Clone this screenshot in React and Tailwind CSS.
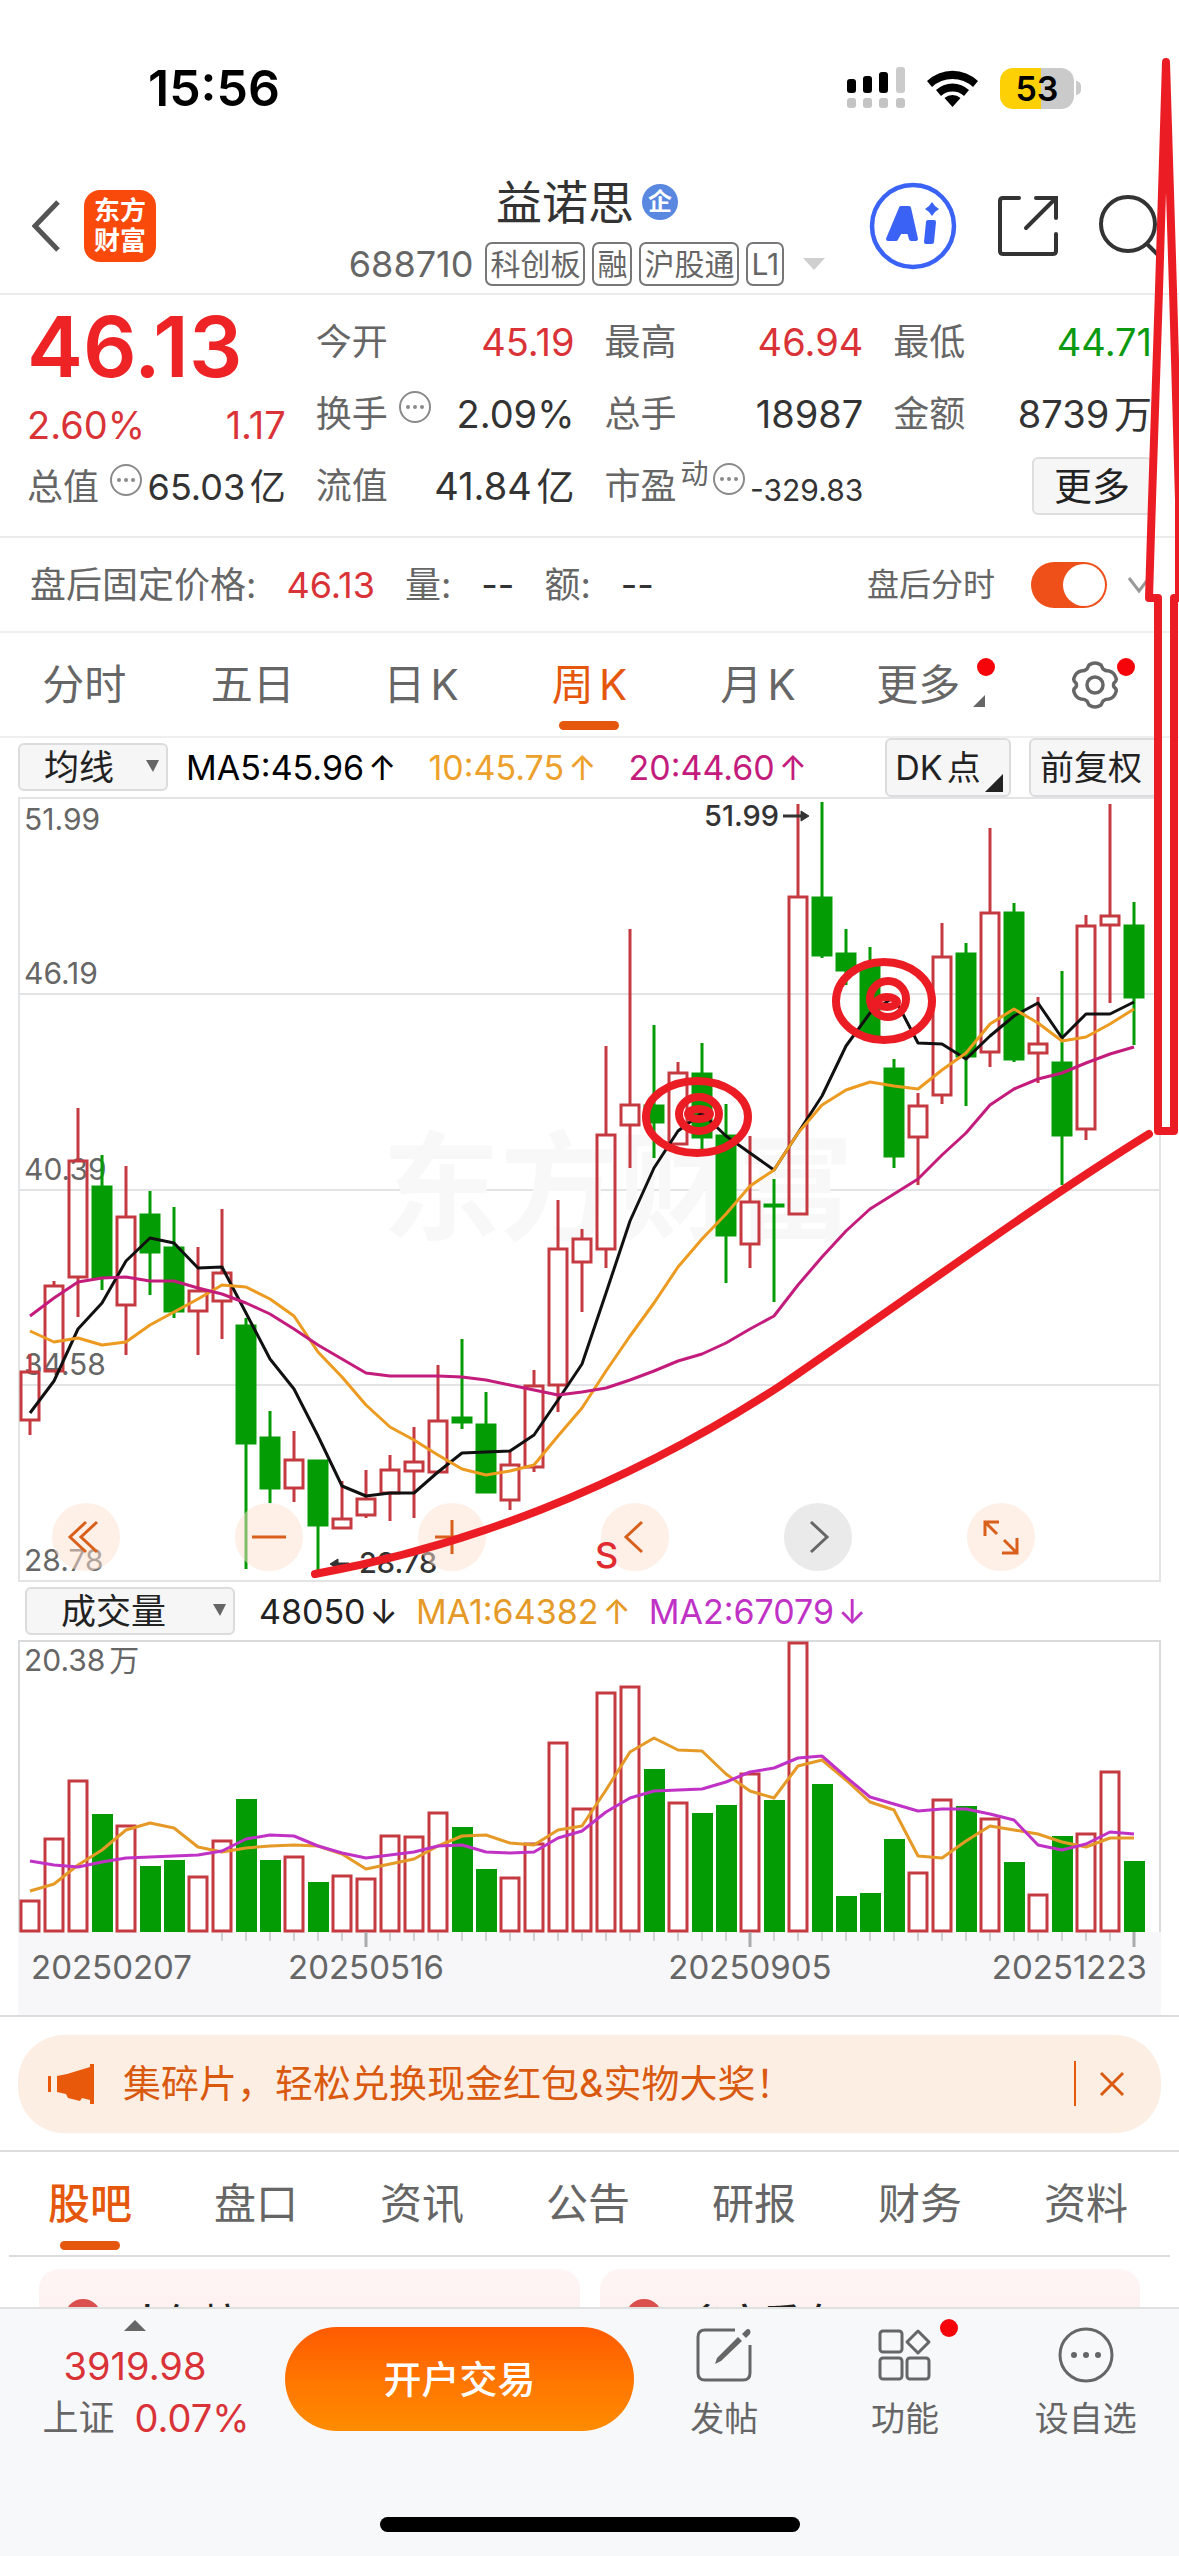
import { useState } from 'react'

// [rising, high, body top, body bottom, low, volume height]
const CANDLES = [
  [1, 557, 574, 624, 638, 33], [1, 484, 488, 575, 575, 95], [1, 311, 363, 481, 520, 153],
  [0, 358, 389, 481, 493, 118], [1, 369, 419, 509, 558, 108], [0, 394, 417, 456, 498, 66],
  [0, 410, 450, 515, 521, 72], [1, 450, 493, 515, 558, 57], [1, 412, 475, 505, 542, 93],
  [0, 521, 528, 647, 772, 133], [0, 614, 640, 692, 706, 72], [1, 634, 662, 692, 705, 77],
  [0, 663, 663, 729, 773, 50], [1, 684, 721, 732, 732, 58], [1, 673, 701, 719, 721, 55],
  [1, 658, 672, 697, 724, 98], [1, 630, 664, 675, 721, 97], [1, 568, 623, 676, 676, 121],
  [0, 542, 620, 626, 632, 105], [0, 595, 627, 696, 696, 63], [1, 655, 667, 704, 713, 56],
  [1, 573, 588, 671, 675, 90], [1, 403, 451, 589, 615, 191], [1, 432, 441, 466, 515, 125],
  [1, 249, 337, 453, 471, 241], [1, 132, 307, 329, 371, 247], [0, 228, 308, 326, 361, 163],
  [1, 265, 275, 348, 348, 131], [0, 246, 276, 341, 352, 119], [0, 307, 338, 439, 486, 127],
  [1, 339, 404, 448, 471, 160], [0, 382, 407, 409, 505, 132], [1, 7, 99, 418, 418, 291],
  [0, 5, 100, 159, 161, 148], [0, 132, 156, 174, 188, 36], [0, 150, 169, 240, 240, 39],
  [0, 262, 271, 360, 371, 93], [1, 296, 308, 341, 388, 61], [1, 126, 159, 299, 307, 134],
  [0, 146, 156, 260, 309, 126], [1, 31, 115, 256, 270, 115], [0, 106, 115, 263, 265, 70],
  [1, 200, 246, 257, 286, 39], [0, 174, 265, 339, 388, 96], [1, 118, 128, 333, 343, 100],
  [1, 7, 118, 129, 206, 162], [0, 105, 128, 201, 248, 71],
]

const MA5 = [616, 584, 532, 506, 464, 441, 446, 471, 470, 516, 562, 592, 639, 689, 699, 696, 696, 675, 656, 655, 654, 638, 603, 567, 496, 424, 371, 334, 316, 339, 356, 373, 336, 299, 249, 216, 200, 246, 247, 262, 239, 219, 206, 241, 217, 217, 205]
const MA10 = [534, 545, 541, 548, 545, 528, 515, 502, 488, 490, 502, 519, 555, 580, 608, 630, 643, 658, 672, 678, 674, 668, 639, 611, 574, 539, 506, 470, 442, 417, 389, 373, 336, 308, 293, 285, 289, 292, 273, 256, 227, 212, 226, 244, 240, 227, 212]
const MA20 = [519, 501, 485, 481, 480, 484, 484, 491, 497, 506, 517, 532, 548, 562, 576, 579, 579, 579, 580, 583, 588, 593, 598, 595, 591, 583, 574, 564, 557, 546, 532, 519, 488, 460, 434, 412, 397, 382, 358, 336, 308, 292, 282, 276, 266, 257, 250]
const VOL_MA1 = [251, 244, 225, 210, 190, 183, 188, 207, 212, 208, 206, 205, 206, 214, 229, 224, 219, 206, 196, 195, 203, 205, 190, 186, 150, 112, 98, 110, 111, 134, 151, 158, 126, 120, 140, 162, 170, 216, 218, 201, 186, 190, 194, 202, 207, 198, 198]
const VOL_MA2 = [221, 225, 227, 222, 218, 217, 216, 215, 211, 199, 195, 196, 206, 213, 218, 215, 212, 206, 205, 212, 213, 212, 198, 191, 172, 158, 151, 150, 149, 142, 132, 128, 118, 116, 137, 157, 164, 171, 169, 169, 174, 180, 205, 210, 204, 192, 194]

const RED = '#c53a40'
const GREEN = '#049c04'

const cx = (i) => 12 + i * 24
const toPoints = (values) => values.map((y, i) => `${cx(i)},${y}`).join(' ')

const PERIODS = ['分时', '五日', '日K', '周K', '月K', '更多']
const SECTIONS = ['股吧', '盘口', '资讯', '公告', '研报', '财务', '资料']

function StatusBar() {
  return (
    <div className="h-[130px] pt-[46px] pl-[148px] pr-[98px] flex items-center justify-between text-black">
      <span className="text-[50px] font-semibold">15:56</span>
      <div className="flex items-center gap-[22px]">
        <svg className="w-[58px] h-[42px]" viewBox="0 0 58 42">
          <rect x="0" y="12" width="9" height="14" rx="3" />
          <rect x="16" y="9" width="9" height="17" rx="3" />
          <rect x="32" y="5" width="9" height="21" rx="3" />
          <rect x="49" y="0" width="9" height="26" rx="3" fill="#cbcbcb" />
          {[0, 16, 32, 49].map((x) => (
            <rect key={x} x={x} y="31" width="9" height="10" rx="3" fill="#c4c4c4" />
          ))}
        </svg>
        <svg className="w-[51px] h-[38px]" viewBox="0 0 51 38">
          <path d="M0 12 A37 37 0 0 1 51 12 L46 18 A30 30 0 0 0 5 18 Z" />
          <path d="M9 21 A24 24 0 0 1 42 21 L37 27 A17 17 0 0 0 14 27 Z" />
          <path d="M17.500 29 A12 12 0 0 1 33.500 29 L25.500 38 Z" />
        </svg>
        <div className="flex items-center gap-[2px]">
          <div className="w-[74px] h-[41px] rounded-[13px] bg-linear-to-r from-[#fdd006] from-55% to-[#cacaca] to-55% flex items-center justify-center text-[34px] font-semibold">
            53
          </div>
          <div className="w-[5px] h-[14px] rounded-r-full bg-[#cacaca]" />
        </div>
      </div>
    </div>
  )
}

function Tag({ children }) {
  return (
    <span className="h-[44px] px-[3px] flex items-center border-2 border-[#777] rounded-[7px] text-[30px] text-[#666]">
      {children}
    </span>
  )
}

function Header() {
  return (
    <header className="h-[165px] pt-[29px] border-b-2 border-[#ebebeb] grid grid-cols-[1fr_auto_1fr] items-center">
      <div className="pl-[32px] flex items-center gap-[24px]">
        <button type="button" aria-label="返回">
          <svg className="w-[28px] h-[52px]" viewBox="0 0 28 52" fill="none" stroke="#555" strokeWidth="5">
            <path d="M26 2 L3 26 L26 50" />
          </svg>
        </button>
        <div className="w-[72px] h-[72px] rounded-[16px] bg-[#fa4a0b] text-white text-[26px] leading-[30px] font-bold flex flex-col items-center justify-center">
          <span>东方</span>
          <span>财富</span>
        </div>
      </div>
      <div className="pt-[8px] pr-[5px] flex flex-col items-center gap-[12px]">
        <h1 className="h-14 flex items-center gap-[8px] text-[46px] text-[#333]">
          益诺思
          <span className="w-[36px] h-[36px] rounded-full bg-[#5a87e0] text-white text-[24px] font-bold flex items-center justify-center">企</span>
        </h1>
        <div className="flex items-center gap-[7px]">
          <span className="mr-[5px] text-[36px] leading-[44px] text-[#666]">688710</span>
          <Tag>科创板</Tag>
          <Tag>融</Tag>
          <Tag>沪股通</Tag>
          <Tag>L1</Tag>
          <svg className="ml-[12px] w-[22px] h-[12px]" viewBox="0 0 22 12" fill="#cfcfcf">
            <path d="M0 0 H22 L11 12 Z" />
          </svg>
        </div>
      </div>
      <div className="pr-[14px] flex items-center justify-end gap-[41px]">
        <button type="button" aria-label="AI">
          <svg className="w-[88px] h-[88px]" viewBox="0 0 88 88" fill="#3a63f5" stroke="#3a63f5">
            <circle cx="44" cy="44" r="41" strokeWidth="4.500" fill="none" />
            <path
              d="M19 57 L32 26 H40 L47 57 H42 L40 50 H31 L27 57 Z M34 43 L37 35 L38 43 Z"
              fillRule="evenodd"
              strokeWidth="4"
              strokeLinejoin="round"
            />
            <path d="M59 40 H65 L63 60 H57 Z" strokeWidth="4" strokeLinejoin="round" />
            <path d="M63 20 L66 24 L70 27 L66 30 L63 34 L60 30 L56 27 L60 24 Z" stroke="none" />
          </svg>
        </button>
        <button type="button" aria-label="分享">
          <svg className="w-[60px] h-[60px]" viewBox="0 0 60 60" fill="none" stroke="#333" strokeWidth="4" strokeLinecap="round">
            <path d="M21 2 H5 Q2 2 2 5 V55 Q2 58 5 58 H55 Q58 58 58 55 V38" />
            <path d="M38 2 H58 V22 M57 3 L28 32" />
          </svg>
        </button>
        <button type="button" aria-label="搜索">
          <svg className="w-[66px] h-[66px]" viewBox="0 0 66 66" fill="none" stroke="#333" strokeWidth="4">
            <circle cx="29" cy="31" r="27" />
            <path d="M47 50 L60 63" />
          </svg>
        </button>
      </div>
    </header>
  )
}

function Hint() {
  return (
    <svg className="w-[34px] h-[34px] mb-[14px] shrink-0" viewBox="0 0 34 34" fill="none" stroke="#8a8a8a" strokeWidth="2">
      <circle cx="17" cy="17" r="15" />
      <g fill="#8a8a8a" stroke="none">
        <circle cx="10" cy="17" r="2" />
        <circle cx="17" cy="17" r="2" />
        <circle cx="24" cy="17" r="2" />
      </g>
    </svg>
  )
}

function Quote({ label, value, color = 'text-[#333]', hint }) {
  return (
    <div className="h-[72px] flex items-center justify-between whitespace-nowrap">
      <span className="flex items-center gap-[10px] text-[36px] text-[#666]">
        {label}
        {hint && <Hint />}
      </span>
      <span className={`text-[38px] ${color}`}>{value}</span>
    </div>
  )
}

function Quotes() {
  return (
    <section className="h-[243px] pt-[11px] px-[27px] border-b-2 border-[#ebebeb] grid grid-cols-4 gap-[30px] items-start">
      <div>
        <div className="h-[82px] flex items-center text-[84px] font-semibold text-[#ee2326]">46.13</div>
        <div className="h-[74px] flex items-center justify-between text-[38px] text-[#d93338]">
          <span>2.60%</span>
          <span>1.17</span>
        </div>
        <div className="h-[50px] flex items-center justify-between text-[36px] text-[#666] whitespace-nowrap">
          <span className="flex items-center gap-[10px]">
            总值
            <Hint />
          </span>
          <span className="text-[#333]">65.03亿</span>
        </div>
      </div>
      <div>
        <Quote label="今开" value="45.19" color="text-[#d93338]" />
        <Quote label="换手" value="2.09%" hint />
        <Quote label="流值" value="41.84亿" />
      </div>
      <div>
        <Quote label="最高" value="46.94" color="text-[#d93338]" />
        <Quote label="总手" value="18987" />
        <div className="h-[72px] flex items-center justify-between text-[36px] text-[#666] whitespace-nowrap">
          <span className="flex items-center">
            市盈
            <span className="ml-[4px] mr-[3px] mb-[24px] text-[28px]">动</span>
            <Hint />
          </span>
          <span className="pt-[8px] text-[30px] text-[#333]">-329.83</span>
        </div>
      </div>
      <div>
        <Quote label="最低" value="44.71" color="text-[#0c9a12]" />
        <Quote label="金额" value="8739万" />
        <div className="h-[72px] flex items-center justify-end">
          <button type="button" className="w-[120px] h-[58px] bg-[#f6f6f7] border-2 border-[#dedede] rounded-[6px] text-[38px] leading-none text-[#222]">
            更多
          </button>
        </div>
      </div>
    </section>
  )
}

function AfterHours() {
  const [on, setOn] = useState(true)
  return (
    <section className="h-[95px] pl-[30px] pr-[28px] border-b-2 border-[#efefef] flex items-center justify-between text-[36px] text-[#666]">
      <div className="flex items-center">
        <span>盘后固定价格:</span>
        <span className="ml-[30px] text-[#d93338]">46.13</span>
        <span className="ml-[30px]">量:</span>
        <span className="ml-[30px] text-[#333]">--</span>
        <span className="ml-[30px]">额:</span>
        <span className="ml-[30px] text-[#333]">--</span>
      </div>
      <div className="flex items-center">
        <label htmlFor="after" className="text-[32px]">盘后分时</label>
        <input
          id="after"
          type="checkbox"
          checked={on}
          onChange={(e) => setOn(e.target.checked)}
          className="ml-[36px] appearance-none w-[76px] h-[46px] p-[2px] rounded-full bg-[#c9c9c9] checked:bg-[#ef4f18] flex checked:justify-end before:block before:w-[42px] before:h-[42px] before:rounded-full before:bg-white"
        />
        <svg className="ml-[20px] w-[24px] h-[18px]" viewBox="0 0 24 18" fill="none" stroke="#999" strokeWidth="3">
          <path d="M2 2 L12 15 L22 2" />
        </svg>
      </div>
    </section>
  )
}

function PeriodTabs() {
  const [active, setActive] = useState('周K')
  return (
    <nav className="h-[105px] border-b-2 border-[#efefef] grid grid-cols-7">
      {PERIODS.map((name) => (
        <button
          key={name}
          type="button"
          onClick={() => setActive(name)}
          className={`flex justify-center text-[42px] ${name === active ? 'text-[#e4570c]' : 'text-[#666]'} ${name === '更多' ? 'pr-4' : ''}`}
        >
          <span className="relative h-full flex items-center">
            {name}
            {name === active && <span className="absolute bottom-[6px] left-1/2 -translate-x-1/2 w-[60px] h-[9px] rounded-full bg-[#e4570c]" />}
            {name === '更多' && (
              <>
                <span className="absolute top-[25px] -right-[35px] w-[18px] h-[18px] rounded-full bg-[#f5040a]" />
                <svg className="absolute bottom-[29px] -right-[25px] w-[12px] h-[12px]" viewBox="0 0 12 12" fill="#666">
                  <path d="M12 0 V12 H0 Z" />
                </svg>
              </>
            )}
          </span>
        </button>
      ))}
      <button type="button" aria-label="设置" className="flex justify-center">
        <span className="relative h-full flex items-center">
          <svg className="w-[48px] h-[48px]" viewBox="0 0 48 48" fill="none" stroke="#666" strokeWidth="3.500" strokeLinejoin="round">
            <path d="M18 4 Q24 0 30 4 L32 8 Q34 10 38 10 Q43 11 45 17 Q46 20 43 22 Q42 24 43 26 Q46 28 45 31 Q43 37 38 38 Q34 38 32 40 L30 44 Q24 48 18 44 L16 40 Q14 38 10 38 Q5 37 3 31 Q2 28 5 26 Q6 24 5 22 Q2 20 3 17 Q5 11 10 10 Q14 10 16 8 Z" />
            <circle cx="24" cy="24" r="8" />
          </svg>
          <span className="absolute top-[25px] -right-[16px] w-[18px] h-[18px] rounded-full bg-[#f5040a]" />
        </span>
      </button>
    </nav>
  )
}

function IndicatorSelect({ label, className, pad }) {
  return (
    <div className={`relative ${className}`}>
      <select
        aria-label={label}
        className={`appearance-none w-full h-[48px] ${pad} bg-[#f6f6f7] border-2 border-[#dcdcde] rounded-[6px] text-[35px] leading-[42px] text-[#222]`}
      >
        <option>{label}</option>
      </select>
      <svg className="absolute right-[9px] top-[18px] w-[13px] h-[12px]" viewBox="0 0 13 12" fill="#666">
        <path d="M0 0 H13 L7 12 Z" />
      </svg>
    </div>
  )
}

function Reading({ text, arrow, className }) {
  return (
    <span className={`flex items-center gap-[4px] ${className}`}>
      {text}
      <span>{arrow}</span>
    </span>
  )
}

function ChartButton({ label, muted, children }) {
  return (
    <button
      type="button"
      aria-label={label}
      className={`w-[68px] h-[68px] rounded-full ${muted ? 'bg-[#dcdcdc]/60 text-[#666]' : 'bg-[#fde0d0]/50 text-[#d9601c]'}`}
    >
      <svg viewBox="0 0 68 68" fill="none" stroke="currentColor" strokeWidth="3">{children}</svg>
    </button>
  )
}

function PriceChart() {
  return (
    <div className="relative mx-[18px]">
      <svg className="block w-full" viewBox="0 0 1143 785">
        <g stroke="#e2e4e6" strokeWidth="2" fill="none">
          <rect x="1" y="1" width="1141" height="783" />
          <path d="M0 197 H1142 M0 393 H1142 M0 588 H1142" />
        </g>
        <text x="364" y="434" fontSize="118" fontWeight="700" fill="#f8f8f8">东方财富</text>
        <g fontSize="30" fill="#666">
          <text x="6" y="33">51.99</text>
          <text x="6" y="187">46.19</text>
          <text x="6" y="383">40.39</text>
          <text x="6" y="578">34.58</text>
          <text x="6" y="774">28.78</text>
        </g>
        {CANDLES.map(([up, high, top, bottom, low], i) => (
          <g key={i} stroke={up ? RED : GREEN} strokeWidth="3" fill={up ? 'none' : GREEN}>
            <path d={`M${cx(i)} ${high} V${top} M${cx(i)} ${bottom} V${low}`} />
            <rect x={cx(i) - 9} y={top + 1} width="18" height={Math.max(bottom - top - 2, 1)} />
          </g>
        ))}
        <g fill="none" strokeWidth="3" strokeLinejoin="round">
          <polyline points={toPoints(MA5)} stroke="#111" />
          <polyline points={toPoints(MA10)} stroke="#ec9a20" />
          <polyline points={toPoints(MA20)} stroke="#c31c7c" />
        </g>
        <g fontSize="29" fontWeight="500" fill="#333">
          <text x="686" y="29">51.99</text>
          <text x="341" y="776">28.78</text>
        </g>
        <g fill="#333" stroke="#333" strokeWidth="3">
          <path d="M765 19 H786" />
          <path d="M783 14 L791 19 L783 24 Z" strokeWidth="1" />
          <path d="M318 767 H331" />
          <path d="M320 762 L312 767 L320 772 Z" strokeWidth="1" />
        </g>
      </svg>
      <div className="absolute bottom-[11px] left-[34px] right-[126px] flex items-end justify-between">
        <ChartButton label="最早">
          <path d="M34 19 L18 34 L34 49 M45 19 L29 34 L45 49" />
        </ChartButton>
        <ChartButton label="缩小">
          <path d="M17 34 H51" />
        </ChartButton>
        <ChartButton label="放大">
          <path d="M17 34 H51 M34 17 V51" />
        </ChartButton>
        <div className="relative flex">
          <ChartButton label="向前">
            <path d="M41 19 L25 34 L41 49" />
          </ChartButton>
          <span className="absolute top-[28px] -left-[6px] text-[36px] leading-[48px] font-medium text-[#e02b30]">S</span>
        </div>
        <ChartButton label="向后" muted>
          <path d="M27 19 L43 34 L27 49" />
        </ChartButton>
        <ChartButton label="全屏">
          <path d="M18 33 V19 H32 M18 19 L30 31 M50 35 V50 H35 M50 50 L37 37" />
        </ChartButton>
      </div>
    </div>
  )
}

function VolumeChart() {
  return (
    <div className="mx-[18px]">
      <svg className="block w-full" viewBox="0 0 1143 375">
        <rect x="0" y="292" width="1143" height="83" fill="#f7f7f9" />
        <path d="M1 292 V1 H1142 V292" fill="none" stroke="#d9dadb" strokeWidth="2" />
        <text x="6" y="31" fontSize="30" fill="#666">20.38万</text>
        {CANDLES.map(([up, , , , , h], i) =>
          up ? (
            <rect key={i} x={cx(i) - 9} y={294 - h} width="18" height={h - 3} fill="white" stroke={RED} strokeWidth="3" />
          ) : (
            <rect key={i} x={cx(i) - 10} y={292 - h} width="21" height={h} fill={GREEN} />
          )
        )}
        <g fill="none" strokeWidth="3" strokeLinejoin="round">
          <polyline points={toPoints(VOL_MA1)} stroke="#e59a27" />
          <polyline points={toPoints(VOL_MA2)} stroke="#c032c6" />
        </g>
        {CANDLES.map((_, i) =>
          i < 8 ? null : (
            <path
              key={i}
              d={`M${cx(i)} 292 v${i % 16 === 14 ? 15 : 9}`}
              stroke="#a9abad"
              strokeWidth={i % 16 === 14 ? 3 : 1}
            />
          )
        )}
        <g fontSize="33" fill="#666">
          <text x="13" y="339">20250207</text>
          <text x="348" y="339" textAnchor="middle">20250516</text>
          <text x="732" y="339" textAnchor="middle">20250905</text>
          <text x="1129" y="339" textAnchor="end">20251223</text>
        </g>
      </svg>
    </div>
  )
}

function Banner() {
  return (
    <section className="h-[137px] px-[18px] border-y-2 border-[#dcdcdc] flex items-center">
      <div className="w-full h-[98px] pl-[30px] pr-[36px] rounded-[46px] bg-[#fdeee4] flex items-center text-[#d9590f]">
        <svg className="w-[46px] h-[40px] shrink-0" viewBox="0 0 46 40" fill="#e8590c">
          <rect x="0" y="12" width="3" height="16" />
          <path d="M9 12 L19 10 L42 3 V0 H46 V40 H42 V36 L34 34 L32 37 L20 34 L18 30 L9 28 Z" />
        </svg>
        <span className="ml-[29px] text-[38px] whitespace-nowrap">集碎片，轻松兑换现金红包&amp;实物大奖！</span>
        <div className="ml-auto w-[2px] h-[45px] bg-[#e8590c]" />
        <button type="button" aria-label="关闭" className="ml-[23px]">
          <svg className="w-[26px] h-[26px]" viewBox="0 0 26 26" stroke="#d9590f" strokeWidth="3">
            <path d="M2 2 L24 24 M24 2 L2 24" />
          </svg>
        </button>
      </div>
    </section>
  )
}

function SectionTabs() {
  const [active, setActive] = useState('股吧')
  return (
    <nav className="h-[105px] mx-[9px] pl-[39px] pr-[42px] border-b-2 border-[#dcdcdc] flex justify-between">
      {SECTIONS.map((name) => (
        <button
          key={name}
          type="button"
          onClick={() => setActive(name)}
          className={`relative flex items-center text-[42px] ${name === active ? 'text-[#e4570c] font-medium' : 'text-[#666]'}`}
        >
          {name}
          {name === active && <span className="absolute bottom-[5px] left-1/2 -translate-x-1/2 w-[60px] h-[9px] rounded-full bg-[#e4570c]" />}
        </button>
      ))}
    </nav>
  )
}

function ForumCard({ title }) {
  return (
    <div className="h-[120px] pt-[28px] px-[26px] rounded-[20px] bg-linear-to-b from-[#fef5f4] to-[#fdecea] flex items-start gap-[28px]">
      <span className="mt-[2px] w-[36px] h-[36px] rounded-full bg-[#d9504e]" />
      <span className="text-[37px] leading-[52px] font-medium text-[#222]">{title}</span>
    </div>
  )
}

function BottomItem({ label, dot, children }) {
  return (
    <button type="button" className="flex-1 flex flex-col items-center text-[34px] text-[#666]">
      <span className="relative">
        <svg className="w-[56px] h-[56px]" viewBox="0 0 56 56" fill="none" stroke="#666" strokeWidth="3">{children}</svg>
        {dot && <span className="absolute -top-[8px] -right-[25px] w-[18px] h-[18px] rounded-full bg-[#f5040a]" />}
      </span>
      <span className="mt-[10px] leading-[52px]">{label}</span>
    </button>
  )
}

function BottomBar() {
  return (
    <footer className="h-[249px] border-t-2 border-[#dfe1e1] bg-[#f7f8fa] flex flex-col justify-between">
      <div className="pt-[18px] pl-[42px] pr-[3px] flex items-start">
        <div className="-mt-[7px] w-[208px] flex flex-col items-center text-[38px] text-[#d93338] whitespace-nowrap">
          <svg className="mr-[22px] w-[22px] h-[11px]" viewBox="0 0 22 11" fill="#666">
            <path d="M11 0 L22 11 H0 Z" />
          </svg>
          <span className="mt-[9px] mr-[22px] leading-[52px]">3919.98</span>
          <span className="flex items-center gap-[20px] leading-[52px]">
            <span className="text-[36px] text-[#666]">上证</span>
            <span>0.07%</span>
          </span>
        </div>
        <button type="button" className="ml-[35px] w-[349px] h-[104px] rounded-full bg-linear-to-b from-[#ff5a00] to-[#ff8c00] text-white text-[38px] font-medium">
          开户交易
        </button>
        <BottomItem label="发帖">
          <path d="M39 3 H9 Q2 3 2 10 V46 Q2 53 9 53 H47 Q54 53 54 46 V18" />
          <path d="M19 37 L21 31 L42 10 L46 14 L25 34 Z M46 7 L50 3 Q52 1 54 3 Q55 5 54 7 L50 11 Z" fill="#666" stroke="none" />
        </BottomItem>
        <BottomItem label="功能" dot>
          <rect x="3" y="4" width="22" height="21" rx="3" />
          <rect x="3" y="31" width="22" height="21" rx="3" />
          <rect x="30" y="31" width="22" height="21" rx="3" />
          <path d="M41 4 L52 15 L41 26 L30 15 Z" strokeLinejoin="round" />
        </BottomItem>
        <BottomItem label="设自选">
          <circle cx="28" cy="28" r="26" />
          <g fill="#666" stroke="none">
            <circle cx="16" cy="28" r="3" />
            <circle cx="28" cy="28" r="3" />
            <circle cx="40" cy="28" r="3" />
          </g>
        </BottomItem>
      </div>
      <div className="mb-[24px] mx-auto w-[420px] h-[15px] rounded-full bg-black" />
    </footer>
  )
}

// Hand-drawn marks over the chart: two circled tops, the rising base line, the target arrow
function Marks() {
  return (
    <svg className="absolute top-0 left-0 w-full pointer-events-none" viewBox="0 0 1179 2556" fill="none" stroke="#ec1c24" strokeWidth="8">
      <path d="M315 1574 C460 1548 620 1490 780 1386 C900 1304 1030 1208 1149 1134" strokeLinecap="round" />
      <path d="M1158 598 H1149 L1152 500 L1159 290 L1166 62 L1173 290 L1179 500 V598 H1174 V1131 H1158 Z" strokeLinejoin="round" />
      <ellipse cx="697" cy="1117" rx="51" ry="36" />
      <ellipse cx="699" cy="1114" rx="20" ry="17" />
      <ellipse cx="699" cy="1114" rx="11" ry="5" />
      <ellipse cx="884" cy="1001" rx="48" ry="39" />
      <ellipse cx="888" cy="999" rx="18" ry="18" />
      <ellipse cx="887" cy="1002" rx="10" ry="5" />
    </svg>
  )
}

export default function App() {
  return (
    <div className="relative h-screen overflow-hidden flex flex-col bg-white font-['Inter','Noto_Sans_CJK_SC',sans-serif] [text-autospace:normal]">
      <main className="flex-1 min-h-0 overflow-hidden">
        <StatusBar />
        <Header />
        <Quotes />
        <AfterHours />
        <PeriodTabs />
        <div className="h-[59px] px-[18px] flex items-center text-[34px] whitespace-nowrap">
          <IndicatorSelect label="均线" className="w-[150px]" pad="pl-[24px]" />
          <Reading text="MA5:45.96" arrow="↑" className="ml-[18px] text-black" />
          <Reading text="10:45.75" arrow="↑" className="ml-[32px] text-[#eda12a]" />
          <Reading text="20:44.60" arrow="↑" className="ml-[32px] text-[#c31c7c]" />
          <button type="button" className="relative ml-auto w-[126px] h-[59px] pr-[20px] bg-[#f6f6f7] border-2 border-[#dcdcde] rounded-[6px] text-[#222]">
            DK点
            <svg className="absolute right-[6px] bottom-[3px] w-[18px] h-[18px]" viewBox="0 0 18 18" fill="#222">
              <path d="M18 0 V18 H0 Z" />
            </svg>
          </button>
          <button type="button" className="ml-[18px] w-[132px] h-[59px] pr-[8px] bg-[#f6f6f7] border-2 border-[#dcdcde] rounded-[6px] text-[#222]">
            前复权
          </button>
        </div>
        <PriceChart />
        <div className="h-[58px] pl-[25px] flex items-center text-[34px] whitespace-nowrap">
          <IndicatorSelect label="成交量" className="w-[210px]" pad="pl-[34px]" />
          <Reading text="48050" arrow="↓" className="ml-[24px] text-[#222]" />
          <Reading text="MA1:64382" arrow="↑" className="ml-[18px] text-[#e59a27]" />
          <Reading text="MA2:67079" arrow="↓" className="ml-[18px] text-[#c032c6]" />
        </div>
        <VolumeChart />
        <Banner />
        <SectionTabs />
        <div className="pt-[12px] px-[39px] grid grid-cols-2 gap-[20px]">
          <ForumCard title="人气榜" />
          <ForumCard title="多空看盘" />
        </div>
      </main>
      <BottomBar />
      <Marks />
    </div>
  )
}
